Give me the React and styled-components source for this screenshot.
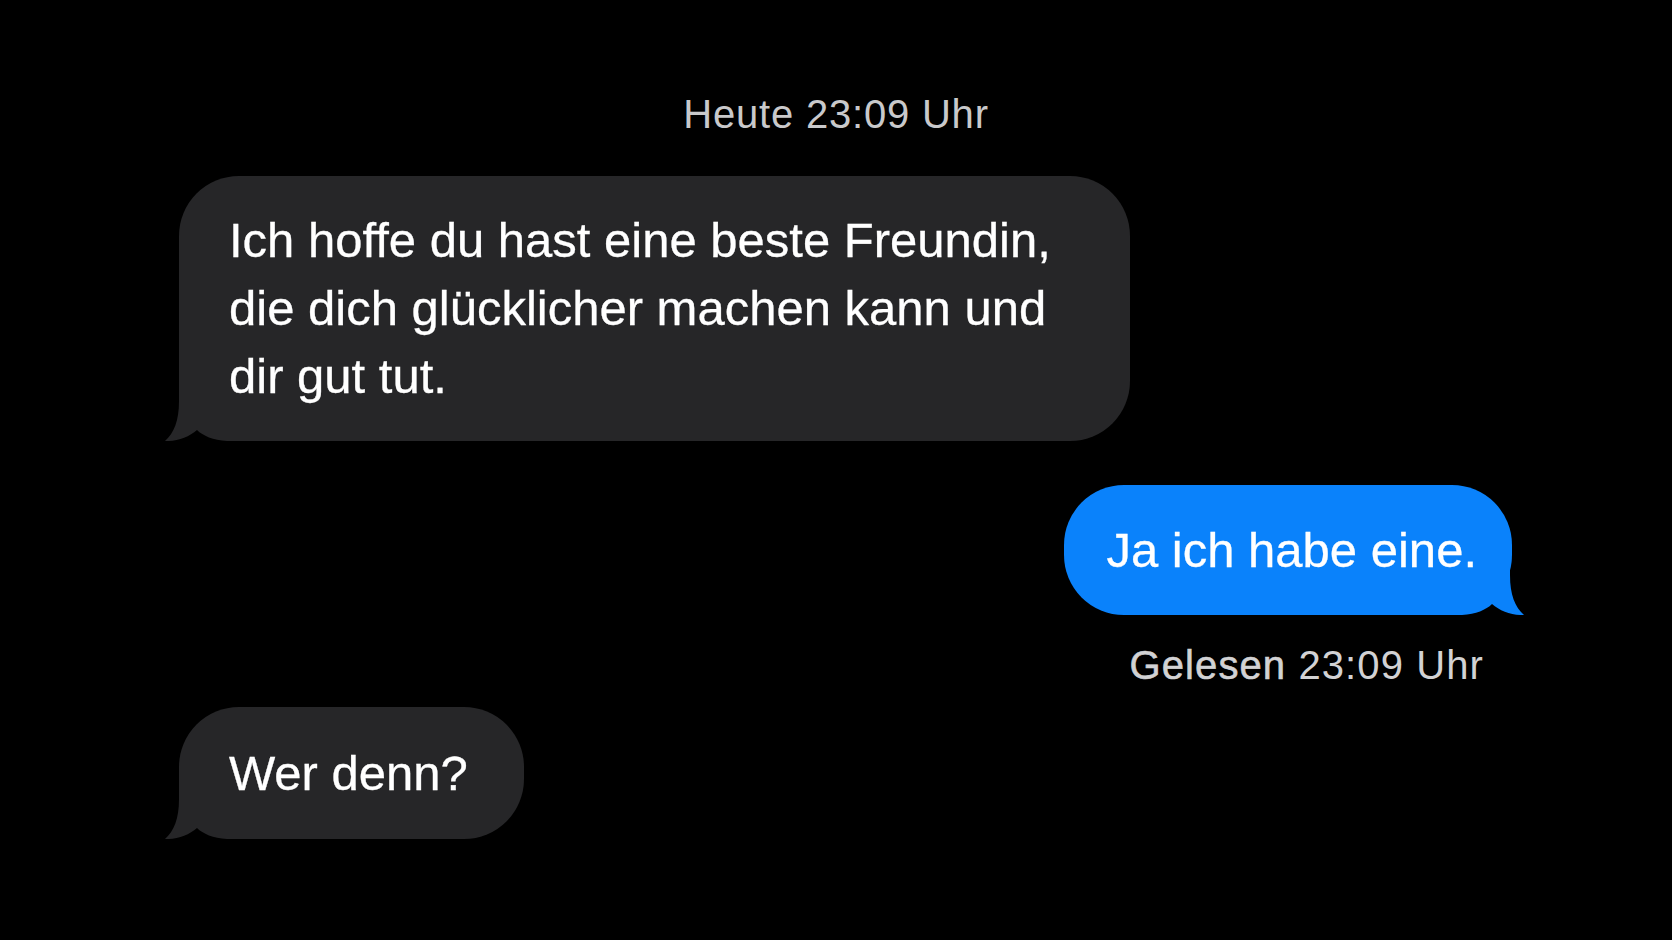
import React from "react";
import styled, { createGlobalStyle, css } from "styled-components";

const GlobalStyle = createGlobalStyle`
  html, body {
    margin: 0;
    padding: 0;
    background: #000;
  }
  body {
    font-family: "Liberation Sans", Arial, sans-serif;
    -webkit-font-smoothing: antialiased;
  }
`;

const Page = styled.main`
  width: 100vw;
  height: 100vh;
  overflow: hidden;
  background: #000;
  display: flex;
  flex-direction: column;
  padding-top: 90px;
  box-sizing: border-box;
`;

const Stamp = styled.div`
  align-self: center;
  font-size: 40px;
  line-height: 48px;
  letter-spacing: 0.8px;
  color: #c9c9cb;
  margin-bottom: 38px;
`;

const Thread = styled.section`
  display: flex;
  flex-direction: column;
  padding: 0 160px 0 179px;
`;

const Row = styled.div`
  display: flex;
  flex-direction: column;
  align-items: ${(p) => (p.$mine ? "flex-end" : "flex-start")};
  margin-top: ${(p) => p.$gap || 0}px;
`;

const Bubble = styled.div`
  position: relative;
  isolation: isolate;
  max-width: 951px;
  box-sizing: border-box;
  border-radius: 60px;
  font-size: 49px;
  line-height: 68px;
  color: #fff;
  -webkit-text-stroke: 0.3px #fff;
  padding: ${(p) => p.$pad || "31px 50px"};
  background: ${(p) => (p.$mine ? "#0a82fb" : "#262628")};
`;

const Tail = styled.svg`
  position: absolute;
  z-index: -1;
  bottom: 0;
  width: 90px;
  height: 60px;
  ${(p) =>
    p.$mine
      ? css`
          right: -12px;
          transform: scaleX(-1);
        `
      : css`
          left: -14px;
        `}
`;

const Receipt = styled.div`
  font-size: 40px;
  line-height: 48px;
  letter-spacing: 1.1px;
  color: #d2d2d4;
  margin: 26px 28px 0 0;

  b {
    font-weight: normal;
    -webkit-text-stroke: 0.6px #d2d2d4;
  }
`;

const BubbleTail = ({ mine, color }) => (
  <Tail $mine={mine} viewBox="0 0 90 60" aria-hidden="true">
    <path
      d="M14,0 L14,20 C14,40 9,52 0,60 C12,60.5 24,56 32,49 C38,55 48,59 62,60 L90,60 L90,0 Z"
      fill={color}
    />
  </Tail>
);

const Message = ({ mine, pad, children }) => (
  <Bubble $mine={mine} $pad={pad}>
    {children}
    <BubbleTail mine={mine} color={mine ? "#0a82fb" : "#262628"} />
  </Bubble>
);

export default function App() {
  return (
    <>
      <GlobalStyle />
      <Page>
        <Stamp>Heute 23:09 Uhr</Stamp>
        <Thread>
          <Row>
            <Message pad="30px 50px 31px 50px">
              Ich hoffe du hast eine beste Freundin, die dich glücklicher
              machen kann und dir gut tut.
            </Message>
          </Row>
          <Row $mine $gap={44}>
            <Message mine pad="31px 35px 31px 43px">
              Ja ich habe eine.
            </Message>
            <Receipt>
              <b>Gelesen</b> 23:09 Uhr
            </Receipt>
          </Row>
          <Row $gap={18}>
            <Message pad="32px 56px 32px 50px">Wer denn?</Message>
          </Row>
        </Thread>
      </Page>
    </>
  );
}
